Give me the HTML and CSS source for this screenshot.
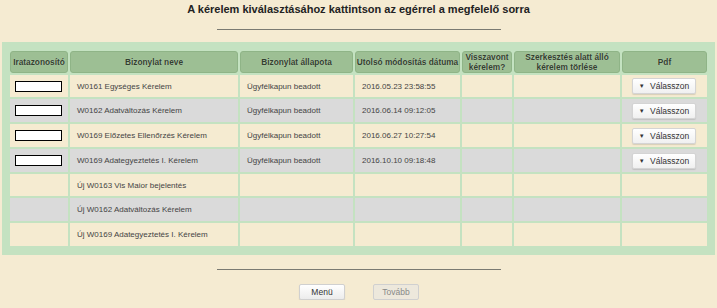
FILE: index.html
```html
<!DOCTYPE html>
<html lang="hu">
<head>
  <meta charset="UTF-8">
  <title>Kérelem kiválasztása</title>
  <link rel="stylesheet" href="styles.css">
</head>
<body>
  <h1 class="title">A kérelem kiválasztásához kattintson az egérrel a megfelelő sorra</h1>
  <hr class="sep">

  <!-- Request list -->
  <div class="panel">
    <table class="grid">
      <colgroup>
        <col class="c-id">
        <col class="c-name">
        <col class="c-state">
        <col class="c-date">
        <col class="c-revoked">
        <col class="c-delete">
        <col class="c-pdf">
      </colgroup>
      <thead>
        <tr>
          <th>Iratazonosító</th>
          <th>Bizonylat neve</th>
          <th>Bizonylat állapota</th>
          <th>Utolsó módosítás dátuma</th>
          <th>Visszavont<br>kérelem?</th>
          <th>Szerkesztés alatt álló<br>kérelem törlése</th>
          <th>Pdf</th>
        </tr>
      </thead>
      <tbody>
        <tr>
          <td><span class="id-box"></span></td>
          <td>W0161 Egységes Kérelem</td>
          <td>Ügyfélkapun beadott</td>
          <td>2016.05.23 23:58:55</td>
          <td></td>
          <td></td>
          <td class="pdf"><button class="pick"><span class="caret">&#9660;</span> Válasszon</button></td>
        </tr>
        <tr class="alt">
          <td><span class="id-box"></span></td>
          <td>W0162 Adatváltozás Kérelem</td>
          <td>Ügyfélkapun beadott</td>
          <td>2016.06.14 09:12:05</td>
          <td></td>
          <td></td>
          <td class="pdf"><button class="pick"><span class="caret">&#9660;</span> Válasszon</button></td>
        </tr>
        <tr>
          <td><span class="id-box"></span></td>
          <td>W0169 Előzetes Ellenőrzés Kérelem</td>
          <td>Ügyfélkapun beadott</td>
          <td>2016.06.27 10:27:54</td>
          <td></td>
          <td></td>
          <td class="pdf"><button class="pick"><span class="caret">&#9660;</span> Válasszon</button></td>
        </tr>
        <tr class="alt">
          <td><span class="id-box"></span></td>
          <td>W0169 Adategyeztetés I. Kérelem</td>
          <td>Ügyfélkapun beadott</td>
          <td>2016.10.10 09:18:48</td>
          <td></td>
          <td></td>
          <td class="pdf"><button class="pick"><span class="caret">&#9660;</span> Válasszon</button></td>
        </tr>
        <tr>
          <td></td>
          <td>Új W0163 Vis Maior bejelentés</td>
          <td></td><td></td><td></td><td></td><td></td>
        </tr>
        <tr class="alt">
          <td></td>
          <td>Új W0162 Adatváltozás Kérelem</td>
          <td></td><td></td><td></td><td></td><td></td>
        </tr>
        <tr>
          <td></td>
          <td>Új W0169 Adategyeztetés I. Kérelem</td>
          <td></td><td></td><td></td><td></td><td></td>
        </tr>
      </tbody>
    </table>
  </div>

  <hr class="sep sep-bottom">

  <!-- Navigation -->
  <div class="nav">
    <button class="btn">Menü</button>
    <button class="btn" disabled>Tovább</button>
  </div>
</body>
</html>
```

FILE: styles.css
```css
/* Page */
body {
  margin: 0;
  background: #f5ebd2;
  font-family: "Liberation Sans", Arial, sans-serif;
  color: #333;
}
.title {
  margin: 0;
  padding-top: 3px;
  height: 15px;
  font-size: 11px;
  line-height: 13px;
  text-align: center;
  color: #222;
}
.sep {
  width: 284px;
  margin: 11px auto 0;
  border: none;
  border-top: 1px solid #7a7a72;
  height: 0;
}

/* Green panel around the table */
.panel {
  margin: 12px 2px 0;
  padding: 7px 6px;
  background: #c4e2c1;
}
.grid {
  width: 701px;
  table-layout: fixed;
  border-spacing: 2px;
  font-size: 8px;
}
.c-id { width: 58px; }
.c-name { width: 168px; }
.c-state { width: 113px; }
.c-date { width: 105px; }
.c-revoked { width: 50px; }
.c-delete { width: 106px; }
.c-pdf { width: 85px; }

.grid th {
  height: 20px;
  padding: 0;
  background: #9dbf94;
  border: 1px solid #8fb487;
  border-radius: 3px;
  font-size: 8.3px;
  line-height: 10px;
  font-weight: bold;
  color: #33402f;
  white-space: nowrap;
  text-shadow: 0 0 1px rgba(255, 255, 255, 0.4);
}
.grid td {
  height: 23px;
  padding: 0 0 0 7px;
  background: #f5ebd1;
  color: #444;
  white-space: nowrap;
}
.grid tbody tr:nth-child(4n+1) td {
  height: 22px;
}
.grid tr.alt td {
  background: #dadada;
}
.id-box {
  display: block;
  width: 45px;
  height: 9px;
  margin-left: -2px;
  background: #fff;
  border: 1px solid #000;
}

/* Pdf dropdown button */
.grid td.pdf {
  padding-left: 10px;
}
.pick {
  width: 64px;
  height: 16px;
  padding: 0;
  border: 1px solid #d4d4d4;
  border-radius: 2px;
  background: linear-gradient(#ffffff, #f0f0f0);
  box-shadow: 0 1px 1px rgba(0, 0, 0, 0.12);
  font-family: "Liberation Sans", Arial, sans-serif;
  font-size: 8.5px;
  color: #333;
}
.caret {
  font-size: 6px;
  vertical-align: 1px;
  margin-right: 3px;
}

/* Bottom navigation */
.sep-bottom {
  margin-top: 14px;
}
.nav {
  display: flex;
  justify-content: center;
  gap: 28px;
  margin-top: 14px;
  padding-left: 1px;
}
.btn {
  width: 46px;
  height: 16px;
  padding: 0;
  border: 1px solid #d0d0d0;
  border-radius: 2px;
  background: linear-gradient(#ffffff, #ececec);
  box-shadow: 0 1px 1px rgba(0, 0, 0, 0.15);
  font-family: "Liberation Sans", Arial, sans-serif;
  font-size: 8.5px;
  color: #333;
}
.btn:disabled {
  background: #ede8dc;
  color: #888;
  box-shadow: none;
}
```
